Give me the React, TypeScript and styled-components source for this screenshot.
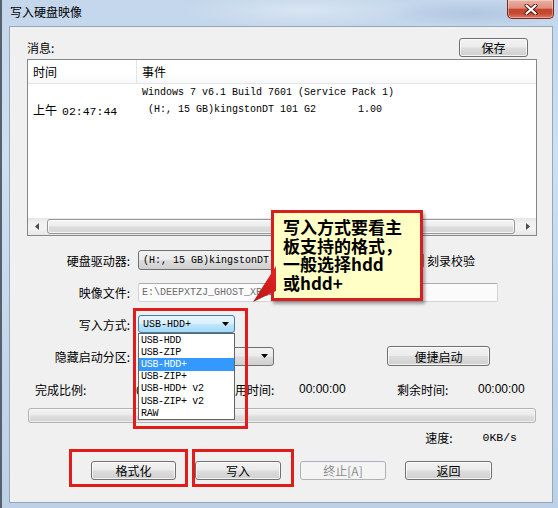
import React from 'react';
import styled, { createGlobalStyle, css } from 'styled-components';

/* ── fonts & page ──────────────────────────────────────── */
const CJK = `"Noto Sans CJK SC", "Liberation Sans", sans-serif`;
const MONO = `"Liberation Mono", "Noto Sans CJK SC", monospace`;

const GlobalStyle = createGlobalStyle`
  html, body { margin: 0; padding: 0; background: #ffffff; }
  body { font-family: ${CJK}; font-size: 12px; color: #000; }
  * { box-sizing: border-box; }
`;

/* ── window frame ──────────────────────────────────────── */
const Window = styled.div`
  position: relative;
  width: 558px;
  height: 508px;
  display: flex;
  flex-direction: column;
  padding: 0 5px 5px 7px;
  border-left: 2px solid #56616d;
  background:
    radial-gradient(ellipse 120px 18px at 300px 10px, rgba(255,255,255,0.35), transparent),
    radial-gradient(ellipse 90px 14px at 470px 14px, rgba(120,150,190,0.25), transparent),
    linear-gradient(180deg, #c3d6eb 0%, #cddff1 30%, #bcd0e7 100%);
  overflow: hidden;
`;

const TitleBar = styled.div`
  height: 26px;
  display: flex;
  align-items: flex-start;
  justify-content: space-between;
  flex: none;
`;

const Title = styled.div`
  margin: 4px 0 0 1px;
  font-size: 12px;
  line-height: 16px;
  color: #000;
`;

const CloseButton = styled.div`
  width: 47px;
  height: 19px;
  margin-right: -1px;
  display: flex;
  align-items: center;
  justify-content: center;
  border: 1px solid #7a2a1f;
  border-top: none;
  border-radius: 0 0 5px 5px;
  background: linear-gradient(180deg, #eab0a2 0%, #de8e7d 45%, #c7452f 52%, #c54a33 75%, #e1785e 100%);
  box-shadow: inset 0 0 0 1px rgba(255,255,255,0.35);
`;

const Client = styled.div`
  position: relative;
  flex: 1;
  display: flex;
  flex-direction: column;
  padding: 11px 15px 0 17px;
  background: #f0f0f0;
  border: 1px solid #98a6b6;
`;

/* ── buttons ───────────────────────────────────────────── */
const Button = styled.div<{ $w: number; $h?: number; $disabled?: boolean; $gap?: number }>`
  width: ${p => p.$w}px;
  height: ${p => p.$h ?? 19}px;
  margin-left: ${p => p.$gap ?? 0}px;
  flex: none;
  display: flex;
  align-items: center;
  justify-content: center;
  border: 1px solid #707070;
  border-radius: 3px;
  background: linear-gradient(180deg, #f2f2f2 0%, #ebebeb 48%, #dddddd 52%, #cfcfcf 100%);
  box-shadow: inset 0 0 0 1px rgba(255,255,255,0.75);
  font-size: 12px;
  color: #000;

  ${p => p.$disabled && css`
    border-color: #adb2b5;
    background: #f4f4f4;
    box-shadow: none;
    color: #8d8d8d;
  `}
`;

/* ── message list ──────────────────────────────────────── */
const TopRow = styled.div`
  height: 19px;
  display: flex;
  align-items: center;
  justify-content: space-between;
  padding-right: 9px;
`;

const ListView = styled.div`
  margin-top: 2px;
  height: 177px;
  display: flex;
  flex-direction: column;
  border: 1px solid #828790;
  background: #fff;
`;

const ListHeader = styled.div`
  height: 24px;
  flex: none;
  display: flex;
  border-bottom: 1px solid #e3e4e6;
  background: linear-gradient(180deg, #ffffff 0%, #ffffff 60%, #f7f8fa 100%);
`;

const HeadCell = styled.div<{ $w?: number }>`
  ${p => (p.$w ? `width: ${p.$w}px; flex: none;` : 'flex: 1;')}
  display: flex;
  align-items: center;
  padding-left: 5px;
  border-right: 1px solid #e3e4e6;
  font-size: 12px;
  &:last-child { border-right: none; }
`;

const ListBody = styled.div`
  flex: 1;
`;

const LogRow = styled.div`
  height: 17px;
  display: flex;
  align-items: center;
`;

const LogCell = styled.div<{ $w?: number }>`
  ${p => (p.$w ? `width: ${p.$w}px; flex: none;` : 'flex: 1;')}
  padding-left: 5px;
  font-family: ${MONO};
  font-size: 10px;
  white-space: pre;
`;

const Ampm = styled.span`
  font-family: ${CJK};
  font-size: 12px;
  margin-right: 5px;
`;

const Clock = styled.span`
  font-family: ${MONO};
  font-size: 11.5px;
`;

const HScroll = styled.div`
  height: 17px;
  flex: none;
  display: flex;
  align-items: stretch;
  background: linear-gradient(180deg, #e6e6e6 0%, #f2f2f2 30%, #f2f2f2 70%, #e6e6e6 100%);
`;

const ScrollArrow = styled.div`
  width: 17px;
  flex: none;
  display: flex;
  align-items: center;
  justify-content: center;
`;

const Thumb = styled.div`
  flex: 1;
  margin: 1px 4px 1px 2px;
  border: 1px solid #979797;
  border-radius: 3px;
  background: linear-gradient(180deg, #f5f5f5 0%, #ececec 45%, #dcdcdc 55%, #d6d6d6 100%);
  box-shadow: inset 0 0 0 1px rgba(255,255,255,0.7);
`;

/* ── form grid ─────────────────────────────────────────── */
const Form = styled.div`
  margin-top: 8px;
  display: grid;
  grid-template-columns: 103px 1fr;
  grid-auto-rows: 32px;
  column-gap: 8px;
`;

const FieldLabel = styled.div`
  justify-self: end;
  align-self: center;
  font-size: 12px;
  white-space: nowrap;
`;

const FieldCell = styled.div`
  display: flex;
  align-items: center;
`;

const Combo = styled.div<{ $w: number; $h?: number; $focus?: boolean }>`
  position: relative;
  width: ${p => p.$w}px;
  height: ${p => p.$h ?? 19}px;
  flex: none;
  display: flex;
  align-items: center;
  padding: 0 18px 0 4px;
  border: 1px solid #707070;
  border-radius: 3px;
  background: linear-gradient(180deg, #f2f2f2 0%, #ebebeb 48%, #dddddd 52%, #cfcfcf 100%);
  font-family: ${MONO};
  font-size: 10px;
  white-space: pre;

  ${p => p.$focus && css`
    border-color: #3c7fb1;
    background: linear-gradient(180deg, #eaf6fd 0%, #d9f0fc 48%, #bee6fd 52%, #a7d9f5 100%);
  `}
`;

const ComboArrow = styled.svg`
  position: absolute;
  right: 5px;
  top: 50%;
  margin-top: -2px;
`;

const DropList = styled.div`
  position: absolute;
  left: -1px;
  top: calc(100% + 1px);
  width: 97px;
  z-index: 5;
  border: 1px solid #646464;
  background: #fff;
`;

const DropItem = styled.div<{ $active?: boolean }>`
  height: 12.2px;
  display: flex;
  align-items: center;
  padding-left: 2px;
  font-family: ${MONO};
  font-size: 10px;
  letter-spacing: -0.3px;
  color: ${p => (p.$active ? '#fff' : '#000')};
  background: ${p => (p.$active ? '#3399ff' : 'transparent')};
`;

const TextField = styled.div<{ $w: number }>`
  width: ${p => p.$w}px;
  height: 19px;
  display: flex;
  align-items: center;
  padding-left: 3px;
  border: 1px solid #cfd3da;
  border-top-color: #abadb3;
  border-radius: 2px;
  background: #fbfbfb;
  color: #6d6d6d;
  font-family: ${MONO};
  font-size: 10px;
  white-space: pre;
  overflow: hidden;
`;

const Check = styled.div`
  width: 13px;
  height: 13px;
  margin-left: 11px;
  flex: none;
  border: 1px solid #8e8f8f;
  background: linear-gradient(135deg, #dcdcdc, #fbfbfb);
`;

const CheckText = styled.span`
  margin-left: 3px;
  font-size: 12px;
`;

/* ── red annotation frame ──────────────────────────────── */
const Marked = styled.div<{ $l: number; $t: number; $r: number; $b: number }>`
  position: relative;
  flex: none;

  &::after {
    content: '';
    position: absolute;
    left: ${p => -p.$l}px;
    top: ${p => -p.$t}px;
    right: ${p => -p.$r}px;
    bottom: ${p => -p.$b}px;
    border: 3px solid #e21b1b;
    z-index: 6;
    pointer-events: none;
  }
`;

/* ── progress ──────────────────────────────────────────── */
const StatRow = styled.div`
  height: 34px;
  display: flex;
  align-items: center;
  padding-left: 8px;
`;

const Stat = styled.span<{ $w?: number }>`
  ${p => (p.$w ? `width: ${p.$w}px;` : '')}
  flex: none;
  font-size: 12px;
  white-space: nowrap;
`;

const Digits = styled.span<{ $w?: number }>`
  ${p => (p.$w ? `width: ${p.$w}px;` : '')}
  flex: none;
  font-family: "Liberation Sans", sans-serif;
  font-size: 12px;
`;

const Progress = styled.div`
  margin: 2px 1px 0 1px;
  height: 15px;
  border: 1px solid #b2b2b2;
  border-radius: 3px;
  background: linear-gradient(180deg, #f3f3f3 0%, #ebebeb 45%, #dddddd 55%, #d4d4d4 100%);
  box-shadow: inset 0 0 0 1px rgba(255,255,255,0.6);
`;

const SpeedRow = styled.div`
  height: 28px;
  display: flex;
  align-items: center;
  justify-content: flex-end;
  padding-right: 20px;
  gap: 30px;
`;

const Speed = styled.span`
  font-family: ${MONO};
  font-size: 11.5px;
`;

const ButtonRow = styled.div`
  margin-top: 10px;
  display: flex;
  gap: 19px;
  padding-left: 64px;
`;

/* ── callout ───────────────────────────────────────────── */
const Callout = styled.div`
  position: absolute;
  left: 261px;
  top: 183px;
  width: 152px;
  height: 91px;
  z-index: 8;
  padding: 5px 0 0 9px;
  border: 3px solid #d61f1f;
  background: #ffffc6;
  box-shadow: 2px 3px 3px rgba(0,0,0,0.35);
  font-size: 17px;
  font-weight: bold;
  line-height: 18.7px;
  color: #000;
`;

const Tail = styled.svg`
  position: absolute;
  left: -23px;
  top: 48px;
  overflow: visible;
`;

/* ── data ──────────────────────────────────────────────── */
const WRITE_MODES = ['USB-HDD', 'USB-ZIP', 'USB-HDD+', 'USB-ZIP+', 'USB-HDD+ v2', 'USB-ZIP+ v2', 'RAW'];

const Arrow = () => (
  <ComboArrow width="7" height="4" viewBox="0 0 7 4">
    <path d="M0 0h7L3.5 4z" fill="#000" />
  </ComboArrow>
);

const App: React.FC = () => (
  <>
    <GlobalStyle />
    <Window>
      <TitleBar>
        <Title>写入硬盘映像</Title>
        <CloseButton>
          <svg width="14" height="11" viewBox="0 0 14 11">
            <path d="M2.5 1.5l9 8M11.5 1.5l-9 8" stroke="#4a1a12" strokeWidth="4" strokeLinecap="round" />
            <path d="M2.5 1.5l9 8M11.5 1.5l-9 8" stroke="#ffffff" strokeWidth="2.2" strokeLinecap="round" />
          </svg>
        </CloseButton>
      </TitleBar>

      <Client>
        <TopRow>
          <span>消息:</span>
          <Button $w={69}>保存</Button>
        </TopRow>

        <ListView>
          <ListHeader>
            <HeadCell $w={109}>时间</HeadCell>
            <HeadCell>事件</HeadCell>
          </ListHeader>
          <ListBody>
            <LogRow>
              <LogCell $w={109} />
              <LogCell>Windows 7 v6.1 Build 7601 (Service Pack 1)</LogCell>
            </LogRow>
            <LogRow>
              <LogCell $w={109}>
                <Ampm>上午</Ampm>
                <Clock>02:47:44</Clock>
              </LogCell>
              <LogCell>{' (H:, 15 GB)kingstonDT 101 G2       1.00'}</LogCell>
            </LogRow>
          </ListBody>
          <HScroll>
            <ScrollArrow>
              <svg width="4" height="7" viewBox="0 0 4 7"><path d="M4 0v7L0 3.5z" fill="#4d4d4d" /></svg>
            </ScrollArrow>
            <Thumb />
            <ScrollArrow>
              <svg width="4" height="7" viewBox="0 0 4 7"><path d="M0 0v7l4-3.5z" fill="#4d4d4d" /></svg>
            </ScrollArrow>
          </HScroll>
        </ListView>

        <Form>
          <FieldLabel>硬盘驱动器:</FieldLabel>
          <FieldCell>
            <Combo $w={262} $h={20}>
              (H:, 15 GB)kingstonDT 101 G2
              <Arrow />
            </Combo>
            <Check />
            <CheckText>刻录校验</CheckText>
          </FieldCell>

          <FieldLabel>映像文件:</FieldLabel>
          <FieldCell>
            <TextField $w={360}>E:\DEEPXTZJ_GHOST_XP_SP3_V2013.GHO</TextField>
          </FieldCell>

          <FieldLabel>写入方式:</FieldLabel>
          <FieldCell>
            <Marked $l={5} $t={7} $r={13} $b={96}>
              <Combo $w={97} $h={18} $focus>
                USB-HDD+
                <Arrow />
                <DropList>
                  {WRITE_MODES.map(m => (
                    <DropItem key={m} $active={m === 'USB-HDD+'}>{m}</DropItem>
                  ))}
                </DropList>
              </Combo>
            </Marked>
          </FieldCell>

          <FieldLabel>隐藏启动分区:</FieldLabel>
          <FieldCell>
            <Combo $w={136}>
              <Arrow />
            </Combo>
            <Button $w={103} $h={20} $gap={113}>便捷启动</Button>
          </FieldCell>
        </Form>

        <StatRow>
          <Stat $w={101}>完成比例:</Stat>
          <Stat $w={87}>0%</Stat>
          <Stat $w={76}>已用时间:</Stat>
          <Digits $w={98}>00:00:00</Digits>
          <Stat $w={81}>剩余时间:</Stat>
          <Digits>00:00:00</Digits>
        </StatRow>

        <Progress />

        <SpeedRow>
          <Stat>速度:</Stat>
          <Speed>0KB/s</Speed>
        </SpeedRow>

        <ButtonRow>
          <Marked $l={22} $t={12} $r={12} $b={7}>
            <Button $w={85}>格式化</Button>
          </Marked>
          <Marked $l={3} $t={12} $r={13} $b={7}>
            <Button $w={86}>写入</Button>
          </Marked>
          <Button $w={86} $disabled>终止[A]</Button>
          <Button $w={87}>返回</Button>
        </ButtonRow>

        <Callout>
          写入方式要看主<br />
          板支持的格式，<br />
          一般选择hdd<br />
          或hdd+
          <Tail width="26" height="42" viewBox="0 0 26 42">
            <defs>
              <linearGradient id="tailFill" x1="0" y1="1" x2="1" y2="0">
                <stop offset="0" stopColor="#b81414" />
                <stop offset="1" stopColor="#e42626" />
              </linearGradient>
            </defs>
            <path d="M25 5 L25 30 L2 41 Z" fill="url(#tailFill)" />
          </Tail>
        </Callout>
      </Client>
    </Window>
  </>
);

export default App;
